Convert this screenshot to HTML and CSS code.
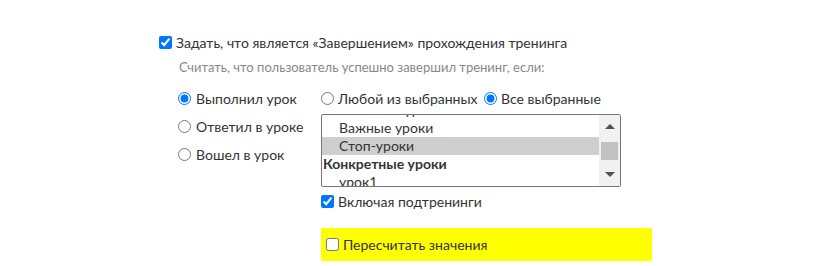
FILE: index.html
```html
<!DOCTYPE html>
<html lang="ru">
<head>
    <meta charset="utf-8">
    <link rel="stylesheet" href="styles.css">
</head>
<body>
    <main class="settings">
        <label class="check-row title-row">
            <input type="checkbox" checked> Задать, что является «Завершением» прохождения тренинга
        </label>
        <p class="hint">Считать, что пользователь успешно завершил тренинг, если:</p>

        <div class="finish-grid">
            <div class="left-col">
                <label class="check-row"><input type="radio" name="cond" checked> Выполнил урок</label>
                <label class="check-row"><input type="radio" name="cond"> Ответил в уроке</label>
                <label class="check-row"><input type="radio" name="cond"> Вошел в урок</label>
            </div>

            <div class="right-col">
                <div class="check-row mode-row">
                    <label class="check-row"><input type="radio" name="mode"> Любой из выбранных</label>
                    <label class="check-row"><input type="radio" name="mode" checked> Все выбранные</label>
                </div>

                <div class="listbox">
                    <div class="list-items">
                        <div class="opt">Обычные уроки</div>
                        <div class="opt">Важные уроки</div>
                        <div class="opt selected">Стоп-уроки</div>
                        <div class="group">Конкретные уроки</div>
                        <div class="opt">урок1</div>
                        <div class="opt">урок2</div>
                    </div>
                    <div class="scrollbar">
                        <span class="arrow up"></span>
                        <span class="thumb"></span>
                        <span class="arrow down"></span>
                    </div>
                </div>

                <label class="check-row sub-row"><input type="checkbox" checked> Включая подтренинги</label>

                <div class="recalc">
                    <label class="check-row"><input type="checkbox"> Пересчитать значения</label>
                </div>
            </div>
        </div>
    </main>
</body>
</html>
```

FILE: styles.css
```css
* {
    box-sizing: border-box;
    margin: 0;
    padding: 0;
}

body {
    background: #fff;
    color: #333;
    font-family: Lato, 'Open Sans', sans-serif;
    font-size: 14px;
}

.settings {
    padding: 32px 0 0 159px;
}

.check-row {
    display: flex;
    align-items: center;
    gap: 4px;
    height: 20px;
    white-space: nowrap;
}

.check-row input {
    width: 13px;
    height: 13px;
    margin: 0;
    flex: none;
}

.hint {
    margin: 5px 0 0 20px;
    height: 20px;
    line-height: 20px;
    font-size: 13px;
    color: #888;
}

.finish-grid {
    display: grid;
    grid-template-columns: 143px 1fr;
    margin: 11px 0 0 19px;
}

.left-col {
    display: flex;
    flex-direction: column;
    gap: 8px;
}

.left-col .check-row {
    gap: 5px;
}

.mode-row {
    gap: 0;
}

.mode-row .check-row:first-child {
    width: 163px;
}

/* Lesson list */
.listbox {
    display: flex;
    width: 300px;
    height: 73px;
    margin-top: 6px;
    border: 1px solid #767676;
    border-radius: 2px;
    overflow: hidden;
}

.list-items {
    flex: 1;
    margin-top: -14px;
}

.opt,
.group {
    height: 18px;
    line-height: 18px;
    white-space: nowrap;
}

.opt {
    padding-left: 17px;
}

.group {
    padding-left: 1px;
    font-weight: bold;
}

.opt.selected {
    background: #cecece;
}

.scrollbar {
    position: relative;
    width: 21px;
    flex: none;
    background: #f1f1f1;
}

.thumb {
    position: absolute;
    left: 2px;
    right: 2px;
    top: 27px;
    height: 18px;
    background: #c1c1c1;
}

.arrow {
    position: absolute;
    left: 6px;
    width: 0;
    height: 0;
    border-left: 5px solid transparent;
    border-right: 5px solid transparent;
}

.arrow.up {
    top: 9px;
    border-bottom: 5px solid #505050;
}

.arrow.down {
    bottom: 9px;
    border-top: 5px solid #505050;
}

.sub-row {
    margin-top: 4px;
}

.recalc {
    width: 331px;
    height: 33px;
    margin-top: 17px;
    padding: 6px 0 0 5px;
    background: #ffff00;
}
```
